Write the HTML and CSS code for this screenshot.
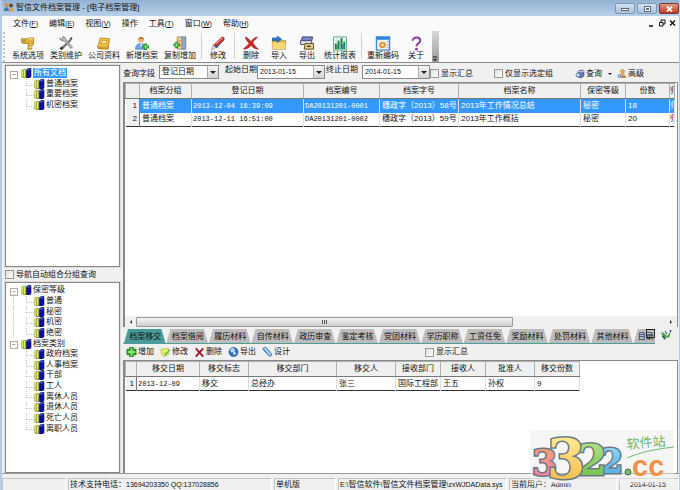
FILE: index.html
```html
<!DOCTYPE html>
<html lang="zh-CN">
<head>
<meta charset="utf-8">
<title>智信文件档案管理</title>
<link rel="stylesheet" href="styles.css">
</head>
<body>
<svg class="defs" aria-hidden="true">
  <symbol id="books" viewBox="0 0 12 11"><path d="M1 2.500l1-1.500 2 1v8H1z" fill="#eaff6c" stroke="#8c9440" stroke-width=".6"/><path d="M3 3l2-2 2 1v8.500H3z" fill="#d8f060" stroke="#505820" stroke-width=".6"/><path d="M7 2l1-1.500H11.500v9L10 11H7z" fill="#1010b0" stroke="#000040" stroke-width=".6"/><path d="M7 2h3l1-1" fill="none" stroke="#7db8ff" stroke-width=".6"/><path d="M6.200 2.500v8" stroke="#111"/></symbol>
  <symbol id="cross" viewBox="0 0 16 16"><path d="M2 1c2 1 5 3 6 5 1-2 3-4 7-5-2 3-5 4-5 6 1 2 3 5 6 7-4 0-6-2-8-4-2 2-4 4-8 4 1-2 5-4 6-6-1-2-4-4-4-7z" fill="#cf2a22" stroke="#8f1712" stroke-width=".6"/></symbol>
</svg>
<div class="window">
  <header class="titlebar">
    <svg class="app" viewBox="0 0 12 10"><circle cx="3.500" cy="3" r="2" fill="#d98b3c"/><path d="M1 9c0-5 5-5 5 0z" fill="#3878b8"/><circle cx="8" cy="3.500" r="2" fill="#6b4530"/><path d="M5.500 9.500c0-5 5.500-5 5.500 0z" fill="#d8a058"/></svg>
    <h1>智信文件档案管理 - [电子档案管理]</h1>
    <div class="winbtns"><button aria-label="最小化"><i class="min"></i></button><button aria-label="最大化"><i class="max"></i></button><button class="close" aria-label="关闭"><svg viewBox="0 0 7 6"><path d="M1 .500l5 5m0-5l-5 5" stroke="#fff" stroke-width="1.800"/></svg></button></div>
  </header>
  <nav class="menu">
    <a href="#">文件<span>(<u>F</u>)</span></a><a href="#">编辑<span>(<u>E</u>)</span></a><a href="#">视图<span>(<u>V</u>)</span></a><a href="#">操作</a><a href="#">工具<span>(<u>T</u>)</span></a><a href="#">窗口<span>(<u>W</u>)</span></a><a href="#">帮助<span>(<u>H</u>)</span></a>
    <div class="mdi">
      <svg viewBox="0 0 28 8"><path d="M1 7h4" stroke="#111" stroke-width="1.500"/><path d="M13 3V1h4v4h-2M11.500 3.500h3.500v3.500h-3.500z" fill="none" stroke="#111"/><path d="M22 1.500l5 5m0-5l-5 5" stroke="#111" stroke-width="1.300"/></svg>
    </div>
  </nav>
  <div class="toolbar">
    <button><svg viewBox="0 0 16 16"><path d="M1 3h6l1-1h6v7l-2 2v3H8v-3l1-3H3L1 7V6h4V5H1z" fill="#e3b23c" stroke="#9a6c10" stroke-width=".7"/><path d="M8 3h5M9 12h3" stroke="#fff0a0"/></svg>系统选项</button>
    <button><svg viewBox="0 0 16 16"><path d="M3 14L13 4" stroke="#777" stroke-width="2.500"/><path d="M1 2c1 3 3 4 5 3l7 8 2-1-7-8c0-2-2-4-4-3l1 2-1 1z" fill="#b8bcc0" stroke="#555" stroke-width=".6"/><path d="M12 3l2-2 1 1-2 3z" fill="#444"/><path d="M1 13l3-2 1 2-2 2z" fill="#333"/></svg>类别维护</button>
    <button><svg viewBox="0 0 16 16"><path d="M4 2l10 1-2 9H1z" fill="#f0c040" stroke="#a87a14" stroke-width=".7"/><path d="M1 12l1 2 11 .5 1-11-2 9z" fill="#c48d1c"/><path d="M6 5h5l-1 3H5z" fill="#fff4b8" stroke="#a87a14" stroke-width=".6"/></svg>公司资料</button>
    <button><svg viewBox="0 0 16 16"><circle cx="7" cy="4" r="3" fill="#f0b070"/><path d="M4 4c0-4 6-4 6 0-2-1-4-2-6 0z" fill="#b86820"/><path d="M1 14c0-8 11-8 11 0z" fill="#72a8e0" stroke="#3b70ac" stroke-width=".6"/><path d="M6 8l1 4 1-4z" fill="#fff"/><path d="M12 8v7M8.500 11.500h7" stroke="#18861c" stroke-width="3"/><path d="M12 9v5M9.500 11.500h5" stroke="#7de06c" stroke-width="1.300"/></svg>新增档案</button>
    <button><svg viewBox="0 0 16 16"><path d="M5 1h9v13H5z" fill="#f0c888" stroke="#8c7040" stroke-width=".7"/><path d="M10 1h4v13h-4z" fill="#8daee0" stroke="#5070a0" stroke-width=".6"/><path d="M5 5h9M5 10h9" stroke="#c09870"/><path d="M4.500 6v7M1 9.500h7" stroke="#18861c" stroke-width="3"/><path d="M4.500 7v5M2 9.500h5" stroke="#7de06c" stroke-width="1.300"/></svg>复制增加</button>
    <hr>
    <button><svg viewBox="0 0 16 16"><path d="M3 10l8-8c2-2 5 0 3 3l-8 7z" fill="#d83028" stroke="#802018" stroke-width=".6"/><path d="M6 8l7-6" stroke="#ffb0a0"/><path d="M10 8l4-4-7 9-3-1z" fill="#3d5f96"/><path d="M3 10l3 2-5 3z" fill="#e0e0e0" stroke="#666" stroke-width=".5"/></svg>修改</button>
    <hr>
    <button><svg><use href="#cross"/></svg>删除</button>
    <button><svg viewBox="0 0 16 16"><path d="M1 3h5l1 2h8v9H1z" fill="#e8bf4c" stroke="#96752c" stroke-width=".7"/><path d="M1 7h14v7H1z" fill="#f7da78"/><path d="M1 2h5V0l5 3.500-5 3.500V5H1z" fill="#2878c8" stroke="#17508c" stroke-width=".6"/></svg>导入</button>
    <button><svg viewBox="0 0 16 16"><path d="M3 1h11l-1 4H2z" fill="#7c88c8" stroke="#30366a"/><path d="M1 5h12v4H1z" fill="#e4e4ee" stroke="#454a70"/><path d="M6 8h9v6H5z" fill="#ead090" stroke="#544420"/><path d="M8 11h4" stroke="#333" stroke-width="1.500"/></svg>导出</button>
    <button><svg viewBox="0 0 16 16"><path d="M1 1h14v14H1z" fill="#eefaf2" stroke="#5ba384"/><path d="M1 5h14M1 9h14M5 1v13M10 1v13" stroke="#a8d8c0" stroke-width=".6"/><path d="M3.500 14V8M6.500 14V5M9.500 14V2M12.500 14V6" stroke="#16834c" stroke-width="2"/><path d="M5 14v-4M11 14V9" stroke="#2a60b0"/></svg>统计报表</button>
    <hr>
    <button><svg viewBox="0 0 16 16"><path d="M1 1h14v14H1z" fill="#e6f2ff" stroke="#3a88d0" stroke-width="1.400"/><path d="M1 1h14v3H1z" fill="#2f86d8"/><circle cx="7.500" cy="9.500" r="3.500" fill="#f09030"/><circle cx="7.500" cy="9.500" r="1.400" fill="#fff0c0"/><path d="M12 6h2M12 9h2M12 12h2" stroke="#79b0e0"/></svg>重新编码</button>
    <button><svg viewBox="0 0 16 16"><path d="M4.500 5c0-4.500 8-4.500 8 0 0 3-4 3-4 6" fill="none" stroke="#8c3aa8" stroke-width="2.200"/><circle cx="8.500" cy="14" r="1.500" fill="#8c3aa8"/></svg>关于</button>
    <div class="more"><svg viewBox="0 0 6 6"><path d="M1 1h4" stroke="#111"/><path d="M1 3h4L3 5z" fill="#111"/></svg></div>
  </div>
  <main class="work">
    <aside>
      <ul class="tree short">
        <li class="root"><svg><use href="#books"/></svg><b class="on">所有文档</b></li>
        <li><svg><use href="#books"/></svg>普通档案</li><li><svg><use href="#books"/></svg>重要档案</li><li class="last"><svg><use href="#books"/></svg>机密档案</li>
      </ul>
      <label class="check nav"><input type="checkbox">导航自动组合分组查询</label>
      <ul class="tree long">
        <li class="root open"><svg><use href="#books"/></svg>保密等级</li>
        <li class="trunk"><svg><use href="#books"/></svg>普通</li><li class="trunk"><svg><use href="#books"/></svg>秘密</li><li class="trunk"><svg><use href="#books"/></svg>机密</li><li class="trunk last"><svg><use href="#books"/></svg>绝密</li>
        <li class="root"><svg><use href="#books"/></svg>档案类别</li>
        <li><svg><use href="#books"/></svg>政府档案</li><li><svg><use href="#books"/></svg>人事档案</li><li><svg><use href="#books"/></svg>干部</li><li><svg><use href="#books"/></svg>工人</li><li><svg><use href="#books"/></svg>离休人员</li><li><svg><use href="#books"/></svg>退休人员</li><li><svg><use href="#books"/></svg>死亡人员</li><li class="last"><svg><use href="#books"/></svg>离职人员</li>
      </ul>
    </aside>
    <section class="right">
      <form class="filter">
        <label for="field">查询字段</label><span class="combo field"><select id="field"><option>登记日期</option></select></span>
        <label class="up" for="from">起始日期</label><span class="combo date"><select id="from"><option>2013-01-15</option></select></span>
        <label class="up" for="to">终止日期</label><span class="combo date to"><select id="to"><option>2014-01-15</option></select></span>
        <label class="check"><input type="checkbox">显示汇总</label>
        <label class="check only"><input type="checkbox">仅显示选定组</label>
        <button type="button" class="query"><svg viewBox="0 0 10 10"><path d="M3 2l4-1 2 1v5L6 9 3 8z" fill="#6c70b8" stroke="#404880" stroke-width=".6"/><path d="M3 2l3 1 3-1" stroke="#d0d4f4" fill="none"/><circle cx="3" cy="6" r="2" fill="#d8eaf4" stroke="#5580a0"/></svg>查询<i class="caret"></i></button>
        <button type="button"><svg viewBox="0 0 10 10"><circle cx="5.500" cy="2.500" r="2" fill="#f0b050" stroke="#a86c20" stroke-width=".5"/><path d="M2 9c0-6 7-6 7 0z" fill="#e8a848"/><circle cx="2.500" cy="7" r="1.500" fill="#d0e4f4" stroke="#4070b0" stroke-width=".8"/><path d="M5 8h4" stroke="#4070b0"/></svg>高级</button>
      </form>
      <div class="pane main">
        <table class="grid">
          <colgroup><col class="n"><col class="g"><col class="t"><col class="c"><col class="w"><col class="m"><col class="s"><col class="f"><col></colgroup>
          <thead><tr><th></th><th>档案分组</th><th>登记日期</th><th>档案编号</th><th>档案字号</th><th>档案名称</th><th>保密等级</th><th>份数</th><th class="cut">归</th></tr></thead>
          <tbody>
            <tr class="sel"><td>1</td><td>普通档案</td><td class="mono">2013-12-04 16:39:09</td><td class="mono">DA20131201-0001</td><td>穗政字（2013）58号</td><td>2013年工作情况总结</td><td>秘密</td><td>18</td><td class="cut">归</td></tr>
            <tr><td>2</td><td>普通档案</td><td class="mono">2013-12-11 16:51:00</td><td class="mono">DA20131201-0002</td><td>穗政字（2013）59号</td><td>2013年工作概括</td><td>秘密</td><td>20</td><td class="cut">归</td></tr>
          </tbody>
        </table>
        <div class="scroll"><i class="prev"></i><span class="thumb"><b></b></span><i class="next"></i></div>
      </div>
      <div class="tabbar">
        <div class="tabs" role="tablist">
          <button class="cur" role="tab">档案移交</button><button role="tab">档案借阅</button><button role="tab">履历材料</button><button role="tab">自传材料</button><button role="tab">政历审查</button><button role="tab">鉴定考核</button><button role="tab">党团材料</button><button role="tab">学历职称</button><button role="tab">工资任免</button><button role="tab">奖励材料</button><button role="tab">处罚材料</button><button role="tab">其他材料</button><button class="part" role="tab">目录</button>
          <i class="box"></i>
        </div>
        <svg class="pin" viewBox="0 0 12 12"><path d="M1 3l3 1 3 3 4-5-2 7-3-1-2 3z" fill="#4a9c50"/><path d="M5 2l2 3M2 7l4 3" stroke="#173f20"/><circle cx="10.500" cy="2" r="1" fill="#2840a0"/></svg>
      </div>
      <div class="subbar">
        <button><svg viewBox="0 0 12 12"><path d="M1 3h3V1h4v2h3v6H8v2H4V9H1z" fill="#2aa02c" stroke="#116018" stroke-width=".7"/><path d="M6 2v8M2 6h8" stroke="#87ea67" stroke-width="2"/></svg>增加</button>
        <button><svg viewBox="0 0 12 12"><path d="M1 3l8-1 1 6-5 3-3-2z" fill="#e3f070" stroke="#a6b338" stroke-width=".7"/><path d="M4 6l2 2 4-5 1 1-5 6" fill="#5fb03c"/></svg>修改</button>
        <button><svg viewBox="0 0 12 12"><path d="M2 2l8 9M10 2l-8 9" stroke="#a01428" stroke-width="2"/></svg>删除</button>
        <button><svg viewBox="0 0 12 12"><circle cx="6" cy="6" r="5" fill="#2d74c4" stroke="#174a88" stroke-width=".6"/><circle cx="5" cy="4" r="2.500" fill="#b4dcfa"/><path d="M6 5l3 3-3 1z" fill="#fff"/></svg>导出</button>
        <button><svg viewBox="0 0 12 12"><path d="M2 3l6 7c2 1 3-1 2-2L5 2C3 0 0 2 2 4l5 5" fill="none" stroke="#3e82c4" stroke-width="1.300"/><path d="M3 3l5 6" stroke="#9acaf0"/></svg>设计</button>
        <label class="check sum"><input type="checkbox">显示汇总</label>
      </div>
      <div class="pane sub">
        <table class="grid">
          <colgroup><col class="n2"><col class="d"><col class="k"><col class="b"><col class="p"><col class="r"><col class="v"><col class="a"><col class="q"></colgroup>
          <thead><tr><th></th><th>移交日期</th><th>移交标志</th><th>移交部门</th><th>移交人</th><th>接收部门</th><th>接收人</th><th>批准人</th><th>移交份数</th></tr></thead>
          <tbody><tr><td>1</td><td class="mono">2013-12-09</td><td>移交</td><td>总经办</td><td>张三</td><td>国际工程部</td><td>王五</td><td>孙权</td><td>9</td></tr></tbody>
        </table>
      </div>
    </section>
  </main>
  <footer>
    <span class="s0"></span><span class="s1">技术支持电话：<em>13694203350 QQ:137028856</em></span><span class="s2">单机版</span><span class="s3"><em>E:\</em>智信软件<em>\</em>智信文件档案管理<em>\zxWJDAData.sys</em></span><span class="s4">当前用户：<em>Admin</em></span><span class="s5"><em>2014-01-15</em></span>
  </footer>
  <svg class="brand" viewBox="0 0 150 54">
    <defs>
      <linearGradient id="p" x2="0" y2="1"><stop stop-color="#f8a868"/><stop offset="1" stop-color="#f078b0"/></linearGradient>
      <linearGradient id="y" x2="0" y2="1"><stop stop-color="#fff4a0"/><stop offset="1" stop-color="#f6b440"/></linearGradient>
      <linearGradient id="g" x2="0" y2="1"><stop stop-color="#c0ec84"/><stop offset="1" stop-color="#64b848"/></linearGradient>
      <linearGradient id="b" x2="0" y2="1"><stop stop-color="#98dcf8"/><stop offset="1" stop-color="#48a8e4"/></linearGradient>
    </defs>
    <rect width="144" height="43" fill="#f4f4f4" opacity=".8"/><rect y="43" width="144" height="11" fill="#f4f4f4" opacity=".45"/>
    <g class="digits"><text x="70" y="43" font-size="33" fill="url(#b)">2</text><text x="47" y="45" font-size="43" fill="url(#g)">2</text><text x="2" y="45" font-size="36" fill="url(#p)">3</text><text x="17" y="48" font-size="55" fill="url(#y)">3</text></g>
    <circle cx="98" cy="42" r="3" fill="#78c850" stroke="#486070"/>
    <text class="cc" x="102" y="46">cc</text>
    <text class="site" x="97" y="19" transform="rotate(-5 97 19)">软件站</text>
    <path d="M97 28c14-6 29-9 47-11" fill="none" stroke="#70b870"/>
  </svg>
</div>
</body>
</html>
```
FILE: styles.css
```css
* { box-sizing: border-box; }
body {
  margin: 0;
  font: 8px/10px "Liberation Sans", "Noto Sans CJK SC", sans-serif;
  color: #111;
  background: #f0f0f0;
}
button, select, input { font: inherit; color: inherit; margin: 0; padding: 0; }
button { border: 0; background: none; white-space: nowrap; }
a { color: inherit; text-decoration: none; }
em { font-size: 7px; font-style: normal; }
.defs { position: absolute; width: 0; height: 0; }
.window {
  position: relative;
  display: flex;
  flex-direction: column;
  min-height: 100vh;
  border-left: 2px solid #b4cce4;
  border-right: 1px solid #b4cce4;
}

.titlebar {
  display: flex;
  height: 16px;
  padding-left: 1px;
  background: linear-gradient(#93b2d3, #b8cfe8);
}
.app { width: 12px; height: 10px; margin: 2px 1px 0 0; }
h1 { margin: 3px 0 0; font-size: 8px; line-height: 10px; font-weight: 400; flex: 1; }
.winbtns { display: flex; gap: 2px; padding-top: 3px; }
.winbtns button {
  display: grid;
  place-items: center;
  width: 20px;
  height: 11px;
  border: 1px solid #7f98b4;
  border-radius: 2px;
  background: linear-gradient(#d4e2f2, #a9c1dc);
}
.winbtns .close { background: linear-gradient(#e49888, #c03820); border-color: #7c3430; }
.close svg { width: 7px; height: 6px; }
.min { width: 8px; height: 3px; margin-top: 2px; background: #fff; border: 1px solid #5a6878; }
.max { width: 7px; height: 6px; background: #5a6878; border: 2px solid #fff; outline: 1px solid #5a6878; outline-offset: -1px; }

.menu {
  display: flex;
  gap: 11px;
  height: 15px;
  padding: 3px 3px 0 11px;
  background: #fafafa;
}
.menu span { font-size: 7px; }
.mdi { margin-left: auto; }
.mdi svg { width: 28px; height: 8px; }

.toolbar {
  display: flex;
  height: 32px;
  padding-left: 7px;
  background: #fafafa;
  border-bottom: 1px solid #8c8c8c;
  background-image: radial-gradient(circle, #c4c4c4 1px, transparent 1px);
  background-size: 4px 4px;
  background-repeat: repeat-y;
}
.toolbar button { min-width: 28px; padding: 4px 3px 0; line-height: 10px; }
.toolbar button svg { display: block; width: 16px; height: 15px; margin: 0 auto; }
.toolbar hr { width: 1px; height: 26px; margin: 2px; border: 0; background: #d0d0d0; }
.toolbar .more {
  display: flex;
  align-items: flex-end;
  width: 7px;
  margin-left: 2px;
  background: linear-gradient(#d8d8d8, #999);
}
.more svg { width: 6px; height: 6px; }

.work { display: flex; flex: 1; gap: 3px; padding: 2px 1px 0 3px; }
aside { display: flex; flex-direction: column; width: 115px; }
.tree {
  display: grid;
  margin: 0;
  padding: 2px 3px;
  list-style: none;
  background: #fff;
  border: 1px solid #888;
  outline: 1px solid #dcdcdc;
}
.tree.short { height: 202px; grid-template-rows: repeat(4, 1fr); padding-bottom: 156px; }
.tree.long { flex: 1; grid-template-rows: repeat(14, 1fr); padding-bottom: 38px; }
.tree li { position: relative; display: flex; align-items: center; gap: 1px; min-height: 0; padding-left: 24px; }
.tree li.root { padding-left: 11px; }
.tree svg { width: 12px; height: 10px; flex: none; }
.tree .on { padding: 0 1px; font-weight: 400; line-height: 10px; color: #fff; background: #3399ff; }
.tree li::before {
  content: "";
  position: absolute;
  left: 17px;
  top: 0;
  width: 7px;
  height: 6px;
  border: dotted #c4c4c4;
  border-width: 0 0 1px 1px;
}
.tree li.root::before {
  content: "−";
  left: 1px;
  top: 3px;
  width: 6px;
  height: 6px;
  font-size: 6px;
  line-height: 4px;
  text-align: center;
  border: 1px solid #aaa;
  background: #fff;
}
.tree .trunk::after, .tree .open::after {
  content: "";
  position: absolute;
  left: 4px;
  top: 0;
  height: 100%;
  border-left: 1px dotted #c4c4c4;
}
.tree .open::after { top: 9px; height: 3px; }
.check { display: flex; align-items: center; gap: 2px; white-space: nowrap; }
.check input {
  appearance: none;
  width: 9px;
  height: 9px;
  background: linear-gradient(135deg, #ddd, #fff);
  border: 1px solid #999;
}
.nav { height: 15px; }

.right { display: flex; flex-direction: column; flex: 1; min-width: 0; }
.filter { display: flex; align-items: center; height: 17px; padding-right: 34px; white-space: nowrap; }
.filter .up { align-self: flex-start; }
.combo { position: relative; height: 14px; border: 1px solid #8a8a8a; background: #fff; align-self: flex-start; }
.combo select {
  display: block;
  width: 100%;
  height: 12px;
  padding-left: 2px;
  border: 0;
  background: none;
  appearance: none;
}
.combo::after, .caret {
  content: "";
  border: 3px solid transparent;
  border-top-color: #222;
  border-bottom: 0;
}
.combo::after { position: absolute; right: 2px; top: 5px; }
.combo::before { content: ""; position: absolute; right: 0; top: 0; width: 10px; height: 12px; background: linear-gradient(#f4f4f4, #d4d4d4); border-left: 1px solid #aaa; }
.combo.field { width: 60px; margin: 0 6px 0 4px; }
.combo.date { width: 68px; margin-right: 1px; font-size: 7px; }
.combo.to { margin: 0 0 0 4px; }
.only { margin: 0 auto 0 21px; }
.filter button { display: flex; align-items: center; gap: 1px; }
.filter button svg { width: 10px; height: 10px; }
.filter .query { margin-right: 5px; }
.caret { margin: 0 0 0 5px; border-width: 2px 2px 0; }

.pane { background: #fff; border: 1px solid #888; border-width: 1px 1px 0 2px; overflow: hidden; }
.main { display: flex; flex-direction: column; height: 245px; }
.grid { border-collapse: collapse; table-layout: fixed; border-bottom: 1px solid #333; }
.main .grid { width: calc(100% - 2px); }
.grid th, .grid td { height: 14px; padding: 0 2px; white-space: nowrap; overflow: hidden; }
.grid th { height: 15px; font-weight: 400; background: #f0f0f0; border: 1px solid #b0b0b0; border-bottom-color: #777; }
.grid td { border-right: 1px solid #ddd; text-align: left; }
.grid td:first-child { text-align: right; background: #f0f0f0; border-right-color: #777; }
.grid .mono { padding-left: 1px; font-family: "Liberation Mono", monospace; font-size: 7px; }
.grid .cut { padding: 0; }
.sel td:not(:first-child) { color: #fff; background: #3399ff; }
col.n { width: 14px; } col.g { width: 52px; } col.t { width: 112px; } col.c { width: 76px; } col.w { width: 79px; } col.m { width: 122px; } col.s { width: 45px; } col.f { width: 44px; }
.sub .grid { width: 454px; border-right: 1px solid #333; }
col.n2 { width: 11px; } col.d { width: 63px; } col.k { width: 49px; } col.b { width: 88px; } col.p { width: 59px; } col.r { width: 45px; } col.v { width: 45px; } col.a { width: 49px; } col.q { width: 45px; }
.scroll { display: flex; align-items: center; gap: 4px; height: 11px; margin-top: auto; padding: 0 3px; background: #f0f0f0; }
.scroll i { border: 2px solid transparent; }
.scroll .prev { border-right-color: #333; }
.scroll .next { margin-left: auto; border-left-color: #333; }
.thumb { display: grid; place-items: center; width: 69%; height: 10px; border: 1px solid #999; border-radius: 1px; background: linear-gradient(#f4f4f4, #cfcfcf); }
.thumb b { width: 5px; height: 4px; background: repeating-linear-gradient(90deg, #555 0 1px, transparent 1px 2px); }

.tabbar { display: flex; align-items: flex-end; height: 17px; padding-right: 6px; }
.tabs { position: relative; display: grid; grid-template-columns: repeat(25, 1fr); flex: 1; border-bottom: 1px solid #509c98; padding-left: 1px; }
.tabs button { grid-column: span 2; height: 14px; padding-top: 2px; background: #bcbcbc; clip-path: polygon(0 100%, 4px 0, calc(100% - 5px) 0, calc(100% - 1px) 100%); }
.tabs .cur { background: #4a9c98; }
.tabs .part { grid-column: span 1; overflow: hidden; padding-left: 4px; text-align: left; clip-path: polygon(0 100%, 4px 0, 100% 0, 100% 100%); }
.box { position: absolute; right: 0; top: 0; width: 9px; height: 9px; border: 1px solid #222; }
.pin { width: 12px; height: 12px; margin: 0 0 3px 5px; }
.subbar { display: flex; align-items: center; gap: 6px; height: 16px; padding-left: 3px; }
.subbar button { display: flex; align-items: center; gap: 1px; }
.subbar svg { width: 11px; height: 12px; }
.subbar .sum { margin-left: 129px; }
.sub { flex: 1; }

footer { display: flex; gap: 2px; height: 17px; padding-top: 4px; border-top: 1px solid #999; white-space: nowrap; }
footer span { height: 13px; padding: 0 1px; line-height: 11px; border: 1px solid #c4c4c4; border-right-color: #fff; border-bottom-color: #fff; overflow: hidden; }
.s0 { width: 64px; } .s1 { width: 204px; } .s2 { width: 62px; } .s3 { width: 169px; } .s4 { width: 108px; } .s5 { flex: 1; }
footer .s5 { padding-left: 10px; }

.brand { position: absolute; right: -1px; bottom: 6px; width: 150px; height: 54px; }
.digits { font-family: "DejaVu Serif", serif; font-weight: 700; stroke: #687888; stroke-width: 3px; paint-order: stroke; }
.cc { font: 700 29px "Liberation Sans", sans-serif; fill: #f49048; }
.site { font: 13px "Noto Sans CJK SC", sans-serif; fill: #68b868; }
```
